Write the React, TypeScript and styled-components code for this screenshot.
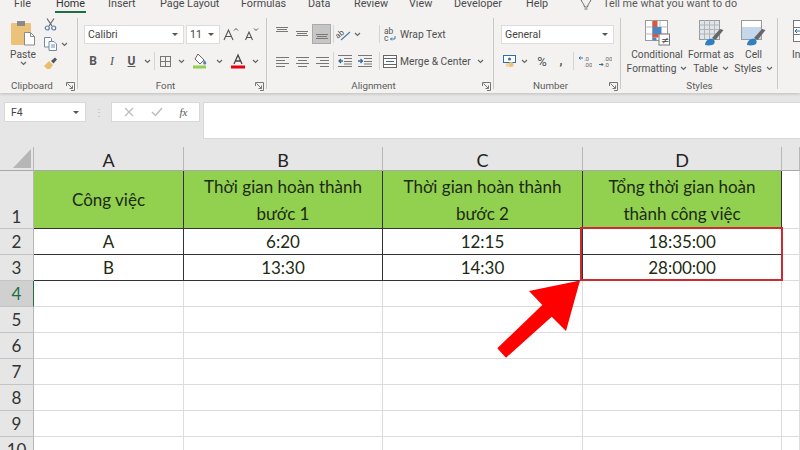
import React from "react";
import styled, { createGlobalStyle } from "styled-components";

const Global = createGlobalStyle`
  html, body { margin: 0; padding: 0; background: #fff; }
  body { font-family: Roboto, "Open Sans", "Liberation Sans", sans-serif; }
`;

const Page = styled.div`
  width: 800px;
  height: 450px;
  overflow: hidden;
  position: relative;
  background: #fff;
`;

const Ribbon = styled.div`
  height: 93px;
  background: #f3f2f1;
  box-shadow: 0 1px 3px rgba(0, 0, 0, 0.18);
  position: relative;
  z-index: 1;
`;

const TabRow = styled.div`
  height: 15px;
  display: flex;
  overflow: hidden;
  padding-left: 14px;
`;

const Tab = styled.div<{ $w: number; $active?: boolean }>`
  width: ${(p) => p.$w}px;
  flex: none;
  height: 13px;
  font-size: 10.8px;
  line-height: 8px;
  color: ${(p) => (p.$active ? "#333" : "#4a4a4a")};
  white-space: nowrap;
  position: relative;

  &::after {
    content: "";
    display: ${(p) => (p.$active ? "block" : "none")};
    position: absolute;
    left: -1px;
    top: 11px;
    width: 31px;
    height: 2px;
    background: #1f6e43;
  }
`;

const TellMe = styled.div`
  display: flex;
  gap: 11px;
  font-size: 10.8px;
  line-height: 8px;
  color: #5a5a5a;
  white-space: nowrap;
`;

const Groups = styled.div`
  display: flex;
  height: 78px;
`;

const Group = styled.div<{ $w: number; $last?: boolean }>`
  width: ${(p) => p.$w}px;
  flex: none;
  position: relative;
  display: flex;
  flex-direction: column;

  &::after {
    content: "";
    display: ${(p) => (p.$last ? "none" : "block")};
    position: absolute;
    right: 0;
    top: 3px;
    bottom: 4px;
    width: 1px;
    background: #c9c9c9;
  }
`;

const GroupBody = styled.div<{ $pad?: number }>`
  flex: 1;
  display: flex;
  padding-left: ${(p) => p.$pad ?? 0}px;
`;

const Stacked = styled.div<{ $pad?: number }>`
  display: flex;
  flex-direction: column;
  gap: 7px;
  padding: 9px 0 0 ${(p) => p.$pad ?? 0}px;
`;

const Row = styled.div`
  display: flex;
  align-items: center;
  height: 20px;
`;

const Slot = styled.div<{ $w: number; $on?: boolean }>`
  width: ${(p) => p.$w}px;
  height: 20px;
  flex: none;
  display: flex;
  align-items: center;
  justify-content: center;
  background: ${(p) => (p.$on ? "#c6c6c6" : "transparent")};
  box-shadow: ${(p) => (p.$on ? "inset 0 0 0 1px #aaa" : "none")};
  color: #444;
`;

const Sep = styled.div`
  width: 1px;
  height: 18px;
  flex: none;
  background: #d4d4d4;
`;

const Letter = styled.span<{ $serif?: boolean; $under?: boolean }>`
  font-family: ${(p) => (p.$serif ? '"Liberation Serif", serif' : 'Roboto, sans-serif')};
  font-size: 12px;
  font-weight: ${(p) => (p.$serif ? 400 : 700)};
  font-style: ${(p) => (p.$serif ? "italic" : "normal")};
  text-decoration: ${(p) => (p.$under ? "underline" : "none")};
  color: #555;
`;

const Combo = styled.div<{ $w: number }>`
  width: ${(p) => p.$w}px;
  height: 19px;
  flex: none;
  box-sizing: border-box;
  background: #fff;
  border: 1px solid #dcdcdc;
  display: flex;
  align-items: center;
  justify-content: space-between;
  padding: 0 5px 0 3px;
  font-size: 10.5px;
  color: #444;
`;

const Caret = styled.span`
  width: 0;
  height: 0;
  border-left: 3px solid transparent;
  border-right: 3px solid transparent;
  border-top: 3px solid #555;
`;

const SmallText = styled.span<{ $w?: number; $big?: boolean }>`
  font-size: ${(p) => (p.$big ? 13 : 10.3)}px;
  color: #505050;
  white-space: nowrap;
  display: inline-block;
  width: ${(p) => (p.$w ? `${p.$w}px` : "auto")};
`;

const GroupLabel = styled.div<{ $launch?: boolean }>`
  height: 16px;
  box-sizing: border-box;
  padding-right: ${(p) => (p.$launch ? 14 : 0)}px;
  font-size: 9.8px;
  line-height: 18px;
  color: #5c5c5c;
  text-align: center;
  position: relative;
`;

const Launcher = styled.svg`
  position: absolute;
  right: 3px;
  top: 5px;
`;

const BigTool = styled.div<{ $w: number }>`
  width: ${(p) => p.$w}px;
  flex: none;
  display: flex;
  flex-direction: column;
  align-items: center;
  padding-top: 5px;
  font-size: 10.2px;
  line-height: 13px;
  color: #505050;
  text-align: center;
  white-space: nowrap;

  svg.main {
    margin-bottom: 2px;
  }
`;

const SideTools = styled.div`
  display: flex;
  flex-direction: column;
  gap: 6px;
  padding-top: 3px;
`;

const ChevronLine = styled.div`
  display: flex;
  align-items: center;
  gap: 4px;
  height: 14px;
`;

const FormulaZone = styled.div`
  height: 54px;
  background: #e6e6e6;
  display: flex;
  align-items: flex-start;
  padding-top: 9px;
  box-sizing: border-box;
`;

const NameBox = styled.div`
  width: 82px;
  height: 20px;
  margin-left: 4px;
  box-sizing: border-box;
  background: #fff;
  border: 1px solid #d8d8d8;
  display: flex;
  align-items: center;
  justify-content: space-between;
  padding: 0 6px;
  font-size: 10.5px;
  color: #444;
`;

const Grip = styled.div`
  width: 25px;
  height: 20px;
  display: flex;
  align-items: center;
  justify-content: center;
  color: #b5b5b5;
  font-size: 10px;
`;

const FxBox = styled.div`
  width: 89px;
  height: 20px;
  box-sizing: border-box;
  background: #fff;
  border: 1px solid #d8d8d8;
  display: flex;
  align-items: center;
  justify-content: space-around;
  padding: 0 3px;
`;

const FxLabel = styled.span`
  font-family: "Liberation Serif", serif;
  font-style: italic;
  font-size: 11px;
  color: #555;
`;

const FormulaInput = styled.div`
  flex: 1;
  height: 37px;
  margin-left: 3px;
  box-sizing: border-box;
  background: #fff;
  border: 1px solid #d8d8d8;
  border-right: none;
`;

const Sheet = styled.div`
  display: grid;
  grid-template-columns: 34px 150px 199px 200px 199px 18px;
  grid-template-rows: 24px 58px repeat(10, 26px);
  position: relative;
  font-family: Lato, "Liberation Sans", sans-serif;
`;

const Corner = styled.div`
  background: #e6e6e6;
  border-bottom: 1px solid #a8a8a8;
  border-right: 1px solid #b8b8b8;
  position: relative;

  &::after {
    content: "";
    position: absolute;
    right: 2px;
    bottom: 2px;
    width: 18px;
    height: 19px;
    background: #b6b6b6;
    clip-path: polygon(100% 0, 100% 100%, 0 100%);
  }
`;

const ColHead = styled.div`
  background: #e6e6e6;
  border-bottom: 1px solid #a8a8a8;
  border-right: 1px solid #b8b8b8;
  font-size: 18px;
  color: #222;
  text-align: center;
  line-height: 26px;
`;

const RowHead = styled.div<{ $active?: boolean; $tall?: boolean }>`
  background: ${(p) => (p.$active ? "#d0d0d0" : "#e6e6e6")};
  border-bottom: 1px solid #c4c4c4;
  border-right: ${(p) => (p.$active ? "1px solid #1f6e43" : "1px solid #b8b8b8")};
  color: ${(p) => (p.$active ? "#1f6e43" : "#333")};
  font-size: 17px;
  display: flex;
  align-items: ${(p) => (p.$tall ? "flex-end" : "center")};
  justify-content: center;
  line-height: 22px;
`;

const Cell = styled.div<{ $head?: boolean; $data?: boolean }>`
  box-sizing: border-box;
  background: ${(p) => (p.$head ? "#92d050" : "#fff")};
  border-right: 1px solid ${(p) => (p.$head || p.$data ? "#333" : "#dcdcdc")};
  border-bottom: ${(p) => (p.$head || p.$data ? "1px solid #333" : "1px solid #dcdcdc")};
  display: flex;
  align-items: center;
  justify-content: center;
  text-align: center;
  font-size: 17px;
  line-height: 27px;
  color: #1c2a12;
`;

const RedFrame = styled.div`
  position: absolute;
  grid-column: 5 / 6;
  grid-row: 3 / 5;
  inset: -2px -1px 0 -3px;
  border: 2px solid #cf2a2e;
  pointer-events: none;
  z-index: 1;
`;

const ArrowMark = styled.svg`
  position: absolute;
  left: 490px;
  top: 130px;
  z-index: 2;
`;

const Launch = () => (
  <Launcher width="9" height="9" viewBox="0 0 9 9" fill="none" stroke="#777" strokeWidth="1">
    <path d="M.5 4V.5H8.5V8.5H5" />
    <path d="M1.500 1.500L6.500 6.500M6.500 3.500V6.500H3.500" />
  </Launcher>
);

const Chev = ({ color = "#666" }: { color?: string }) => (
  <svg width="7" height="5" viewBox="0 0 7 5" fill="none" stroke={color} strokeWidth="1.2">
    <path d="M1 1l2.500 2.500L6 1" />
  </svg>
);

const PasteIcon = () => (
  <svg className="main" width="25" height="26" viewBox="0 0 25 26">
    <rect x="0" y="3" width="20" height="22" rx="1" fill="#eac27a" />
    <rect x="6" y="1" width="8" height="5" fill="#8a8a8a" />
    <path d="M13.500 12.500h6l4 4v8.500h-10z" fill="#fff" stroke="#8a8a8a" />
    <path d="M19.500 12.500v4h4" fill="none" stroke="#8a8a8a" />
  </svg>
);

const CutIcon = () => (
  <svg width="13" height="13" viewBox="0 0 13 13" fill="none" stroke="#5b7fa6" strokeWidth="1.2">
    <path d="M3 .5l5 7.500M10 .5L5 8" stroke="#666" />
    <circle cx="3.300" cy="10" r="2" />
    <circle cx="9.700" cy="10" r="2" />
  </svg>
);

const CopyIcon = () => (
  <svg width="13" height="14" viewBox="0 0 13 14" fill="#fff" stroke="#6d8cab">
    <path d="M.5.5h6l1 1V10h-7z" />
    <path d="M5 4.500h5l2.500 2.500v6.500H5z" />
    <path d="M7 8h4M7 10h4" />
  </svg>
);

const BrushIcon = () => (
  <svg width="14" height="13" viewBox="0 0 14 13">
    <path d="M0 9l5-5 4 4-3 4H3z" fill="#e9bd6c" />
    <path d="M7 4l4-3.500 2 2-3.500 4z" fill="#555" />
  </svg>
);

const FontGrow = ({ small }: { small?: boolean }) => (
  <svg width="17" height="14" viewBox="0 0 17 14" fill="none" stroke="#555">
    <path d={small ? "M2.500 13l3.500-8 3.500 8M3.700 10.500h4.600" : "M1 13l4.500-10L10 13M2.800 9.500h5.400"} strokeWidth="1.1" />
    <path d={small ? "M11 1.500l2 2 2-2" : "M11 3.500l2-2 2 2"} strokeWidth="1" />
  </svg>
);

const BorderIcon = () => (
  <svg width="13" height="13" viewBox="0 0 13 13" fill="none" stroke="#777">
    <rect x="1.500" y="1.500" width="10" height="10" />
    <path d="M6.500 1.500v10M1.500 6.500h10" />
  </svg>
);

const FillIcon = () => (
  <svg width="15" height="16" viewBox="0 0 15 16">
    <path d="M5 1l6 6-4 4-5-5z" fill="#fff" stroke="#666" />
    <path d="M11.500 7c1 1.200 1.800 2.300 1.800 3a1.600 1.600 0 0 1-3.200 0c0-.7.6-1.800 1.400-3z" fill="#4f81bd" />
    <rect x="0" y="12.500" width="13" height="3" fill="#92d050" />
  </svg>
);

const ColorA = () => (
  <svg width="14" height="16" viewBox="0 0 14 16" fill="none" stroke="#444">
    <path d="M3 11l4-9 4 9M4.500 8h5" strokeWidth="1.300" />
    <rect x="0" y="12.500" width="14" height="3" fill="#e8000f" stroke="none" />
  </svg>
);

const Lines = ({ rows }: { rows: [number, number][] }) => (
  <svg width="13" height="11" viewBox="0 0 13 11" stroke="#777">
    {rows.map(([a, b], i) => (
      <path key={i} d={`M${a} ${1.5 + i * 3}H${b}`} />
    ))}
  </svg>
);

const VLines = ({ y }: { y: number }) => (
  <svg width="12" height="16" viewBox="0 0 12 16" stroke="#777">
    <path d={`M0 ${y + 0.5}h12M1 ${y + 2.5}h10M0 ${y + 4.5}h12`} />
  </svg>
);

const OrientIcon = () => (
  <svg width="15" height="14" viewBox="0 0 15 14" fill="none">
    <text x="0" y="9" fontSize="8" fill="#555" fontFamily="Roboto" transform="rotate(-40 5 8)">ab</text>
    <path d="M5 13L14 5" stroke="#4a7cb0" strokeWidth="1.200" />
  </svg>
);

const IndentIcon = ({ out }: { out?: boolean }) => (
  <svg width="14" height="12" viewBox="0 0 14 12" fill="none" stroke="#777">
    <path d="M0 .5h14M6 3.500h8M6 6.500h8M0 11.500h14M6 9h8" />
    <path
      d={out ? "M5 6H1M3 4L1 6l2 2" : "M0 6h4M2.500 4l2 2-2 2"}
      stroke="#2f6ea5"
      strokeWidth="1.300"
    />
  </svg>
);

const WrapIcon = () => (
  <svg width="12" height="15" viewBox="0 0 12 15" fill="none">
    <text x="0" y="7" fontSize="8.500" fill="#555" fontFamily="Roboto">ab</text>
    <text x="0" y="14" fontSize="8.500" fill="#555" fontFamily="Roboto">c</text>
    <path d="M11 9v3H6.500M8 10.500L6.500 12 8 13.500" stroke="#3f78ad" />
  </svg>
);

const MergeIcon = () => (
  <svg width="14" height="13" viewBox="0 0 14 13" fill="#fff" stroke="#666">
    <rect x=".5" y=".5" width="13" height="12" />
    <path d="M.5 3.500h13M.5 9.500h13" />
    <path d="M3 6.500h8" stroke="#2f6ea5" />
  </svg>
);

const MoneyIcon = () => (
  <svg width="14" height="14" viewBox="0 0 14 14">
    <rect x=".5" y="1.500" width="12" height="7" fill="#fff" stroke="#2f6ea5" />
    <circle cx="6.500" cy="5" r="1.500" fill="#2f6ea5" />
    <circle cx="8" cy="10.500" r="2.500" fill="#eac27a" />
    <circle cx="4.500" cy="11" r="2" fill="#f0d6a0" />
  </svg>
);

const DecimalIcon = ({ more }: { more?: boolean }) => (
  <svg width="14" height="13" viewBox="0 0 14 13">
    <path d={more ? "M5 3H1M2.500 1.500L1 3l1.500 1.500" : "M1 9.500h4M3.500 8L5 9.500 3.500 11"} fill="none" stroke="#2f6ea5" />
    <text x="6" y="5.500" fontSize="6" fill="#666" fontFamily="Roboto">{more ? ".0" : ".00"}</text>
    <text x="6" y="11.500" fontSize="6" fill="#666" fontFamily="Roboto">{more ? ".00" : ".0"}</text>
  </svg>
);

const CondIcon = () => (
  <svg className="main" width="25" height="26" viewBox="0 0 25 26">
    <rect x=".5" y=".5" width="22" height="20" fill="#fff" stroke="#9a9a9a" />
    <path d="M.5 7h22M.5 14h22M7.500.5v20M15 .5v20" stroke="#bbb" />
    <rect x="7.500" y="1" width="5" height="6" fill="#d9593d" />
    <rect x="7.500" y="7" width="9" height="7" fill="#4a86c5" />
    <rect x="7.500" y="14" width="6" height="3.500" fill="#d9593d" />
    <rect x="7.500" y="17.500" width="4" height="3" fill="#4a86c5" />
    <rect x="14" y="14" width="10.500" height="11" fill="#fff" stroke="#777" />
    <text x="16" y="23.500" fontSize="10" fill="#444" fontFamily="DejaVu Sans">≠</text>
  </svg>
);

const TableIcon = ({ cell }: { cell?: boolean }) => (
  <svg className="main" width="25" height="26" viewBox="0 0 25 26">
    <rect x=".5" y=".5" width="20" height="19" fill={cell ? "#fff" : "#dfe5ec"} stroke="#9a9a9a" />
    {cell ? (
      <rect x="1" y="7" width="19" height="12" fill="#c5d7ea" />
    ) : (
      <path d="M.5 5h20M.5 9.500h20M.5 14h20M5.500.5v19M10.500.5v19M15.500.5v19" stroke="#b4b4b4" />
    )}
    <path d="M13 18l8-9 3.500 1-8 10z" fill="#666" />
    <path d="M6 25c0-4 4-7 8-6 2 1 2 3 1 5-1 1-5 2-9 1z" fill="#2f7fc1" />
  </svg>
);

const InsertIcon = () => (
  <svg className="main" width="25" height="26" viewBox="0 0 25 26" fill="#fff" stroke="#777">
    <rect x=".5" y=".5" width="24" height="7" />
    <rect x=".5" y="7.500" width="24" height="7" />
    <rect x=".5" y="14.500" width="24" height="7" />
    <path d="M9 .5v21" />
    <path d="M7 11H2M4 9l-2 2 2 2" stroke="#2f6ea5" fill="none" />
  </svg>
);

const Bulb = () => (
  <svg width="12" height="11" viewBox="0 0 12 11" fill="none" stroke="#666" style={{ marginTop: -1 }}>
    <path d="M1 0c0 3 3 4 3.500 8h3C8 4 11 3 11 0" />
    <path d="M4.500 10h3" />
  </svg>
);

const X = () => (
  <svg width="10" height="10" viewBox="0 0 10 10" stroke="#bdbdbd" strokeWidth="1.300">
    <path d="M1 1l8 8M9 1l-8 8" />
  </svg>
);

const Check = () => (
  <svg width="12" height="10" viewBox="0 0 12 10" fill="none" stroke="#bdbdbd" strokeWidth="1.500">
    <path d="M1 5l3.500 3.500L11 1" />
  </svg>
);

const tabs: [string, number][] = [
  ["File", 42],
  ["Home", 52],
  ["Insert", 52],
  ["Page Layout", 81],
  ["Formulas", 67],
  ["Data", 46],
  ["Review", 55],
  ["View", 45],
  ["Developer", 72],
  ["Help", 54],
];

const rowNums = [4, 5, 6, 7, 8, 9, 10, 11, 12, 13];

export default function App() {
  return (
    <Page>
      <Global />
      <Ribbon>
        <TabRow>
          {tabs.map(([name, w]) => (
            <Tab key={name} $w={w} $active={name === "Home"}>
              {name}
            </Tab>
          ))}
          <TellMe>
            <Bulb />
            Tell me what you want to do
          </TellMe>
        </TabRow>
        <Groups>
          <Group $w={78}>
            <GroupBody $pad={2}>
              <BigTool $w={42}>
                <PasteIcon />
                Paste
                <Chev />
              </BigTool>
              <SideTools>
                <CutIcon />
                <ChevronLine>
                  <CopyIcon />
                  <Chev />
                </ChevronLine>
                <BrushIcon />
              </SideTools>
            </GroupBody>
            <GroupLabel $launch>
              Clipboard
              <Launch />
            </GroupLabel>
          </Group>

          <Group $w={189}>
            <GroupBody>
              <Stacked $pad={6}>
                <Row>
                  <Combo $w={100}>
                    Calibri
                    <Caret />
                  </Combo>
                  <Slot $w={2} />
                  <Combo $w={34}>
                    11
                    <Caret />
                  </Combo>
                  <Slot $w={22}><FontGrow /></Slot>
                  <Slot $w={19}><FontGrow small /></Slot>
                </Row>
                <Row>
                  <Slot $w={18}><Letter>B</Letter></Slot>
                  <Slot $w={20}><Letter $serif>I</Letter></Slot>
                  <Slot $w={19}><Letter $under>U</Letter></Slot>
                  <Slot $w={13}><Chev /></Slot>
                  <Sep />
                  <Slot $w={20}><BorderIcon /></Slot>
                  <Slot $w={12}><Chev /></Slot>
                  <Slot $w={27}><FillIcon /></Slot>
                  <Slot $w={11}><Chev /></Slot>
                  <Slot $w={25}><ColorA /></Slot>
                  <Slot $w={11}><Chev /></Slot>
                </Row>
              </Stacked>
            </GroupBody>
            <GroupLabel $launch>
              Font
              <Launch />
            </GroupLabel>
          </Group>

          <Group $w={227}>
            <GroupBody>
              <Stacked $pad={5}>
                <Row>
                  <Slot $w={20}><VLines y={1} /></Slot>
                  <Slot $w={20}><VLines y={5} /></Slot>
                  <Slot $w={19} $on><VLines y={8} /></Slot>
                  <Slot $w={2} />
                  <Sep />
                  <Slot $w={19}><OrientIcon /></Slot>
                  <Slot $w={9}><Chev /></Slot>
                  <Slot $w={17} />
                  <Sep />
                  <Slot $w={20}><WrapIcon /></Slot>
                  <SmallText>Wrap Text</SmallText>
                </Row>
                <Row>
                  <Slot $w={20}><Lines rows={[[0, 13], [0, 9], [0, 13], [0, 9]]} /></Slot>
                  <Slot $w={20}><Lines rows={[[0, 13], [2, 11], [0, 13], [2, 11]]} /></Slot>
                  <Slot $w={20}><Lines rows={[[0, 13], [4, 13], [0, 13], [4, 13]]} /></Slot>
                  <Slot $w={1} />
                  <Sep />
                  <Slot $w={21}><IndentIcon out /></Slot>
                  <Slot $w={19}><IndentIcon /></Slot>
                  <Slot $w={5} />
                  <Sep />
                  <Slot $w={20}><MergeIcon /></Slot>
                  <SmallText $w={77}>Merge &amp; Center</SmallText>
                  <Chev />
                </Row>
              </Stacked>
            </GroupBody>
            <GroupLabel $launch>
              Alignment
              <Launch />
            </GroupLabel>
          </Group>

          <Group $w={127}>
            <GroupBody>
              <Stacked $pad={7}>
                <Row>
                  <Combo $w={113}>
                    General
                    <Caret />
                  </Combo>
                </Row>
                <Row>
                  <Slot $w={18}><MoneyIcon /></Slot>
                  <Slot $w={10}><Chev /></Slot>
                  <Slot $w={26}><SmallText $big>%</SmallText></Slot>
                  <Slot $w={12}><Letter>,</Letter></Slot>
                  <Slot $w={6} />
                  <Sep />
                  <Slot $w={22}><DecimalIcon more /></Slot>
                  <Slot $w={18}><DecimalIcon /></Slot>
                </Row>
              </Stacked>
            </GroupBody>
            <GroupLabel $launch>
              Number
              <Launch />
            </GroupLabel>
          </Group>

          <Group $w={157}>
            <GroupBody>
              <BigTool $w={72}>
                <CondIcon />
                Conditional
                <ChevronLine>Formatting <Chev /></ChevronLine>
              </BigTool>
              <BigTool $w={36}>
                <TableIcon />
                Format as
                <ChevronLine>Table <Chev /></ChevronLine>
              </BigTool>
              <BigTool $w={49}>
                <TableIcon cell />
                Cell
                <ChevronLine>Styles <Chev /></ChevronLine>
              </BigTool>
            </GroupBody>
            <GroupLabel>Styles</GroupLabel>
          </Group>

          <Group $w={22} $last>
            <GroupBody>
              <BigTool $w={54}>
                <InsertIcon />
                Insert
                <Chev />
              </BigTool>
            </GroupBody>
          </Group>
        </Groups>
      </Ribbon>

      <FormulaZone>
        <NameBox>
          F4
          <Caret />
        </NameBox>
        <Grip>⋮</Grip>
        <FxBox>
          <X />
          <Check />
          <FxLabel>fx</FxLabel>
        </FxBox>
        <FormulaInput />
      </FormulaZone>

      <Sheet>
        <Corner />
        {["A", "B", "C", "D"].map((c) => (
          <ColHead key={c}>{c}</ColHead>
        ))}
        <ColHead />

        <RowHead $tall>1</RowHead>
        <Cell $head>Công việc</Cell>
        <Cell $head>Thời gian hoàn thành<br />bước 1</Cell>
        <Cell $head>Thời gian hoàn thành<br />bước 2</Cell>
        <Cell $head>Tổng thời gian hoàn<br />thành công việc</Cell>
        <Cell />

        <RowHead>2</RowHead>
        <Cell $data>A</Cell>
        <Cell $data>6:20</Cell>
        <Cell $data>12:15</Cell>
        <Cell $data>18:35:00</Cell>
        <Cell />

        <RowHead>3</RowHead>
        <Cell $data>B</Cell>
        <Cell $data>13:30</Cell>
        <Cell $data>14:30</Cell>
        <Cell $data>28:00:00</Cell>
        <Cell />

        {rowNums.map((n) => (
          <React.Fragment key={n}>
            <RowHead $active={n === 4}>{n}</RowHead>
            <Cell />
            <Cell />
            <Cell />
            <Cell />
            <Cell />
          </React.Fragment>
        ))}

        <RedFrame />
        <ArrowMark width="90" height="90" viewBox="490 277 90 90">
          <polygon
            points="580,280.500 529,291 542.300,305 497.300,348.300 506,357.700 551.700,316.700 566,331"
            fill="#fe0000"
          />
        </ArrowMark>
      </Sheet>
    </Page>
  );
}
